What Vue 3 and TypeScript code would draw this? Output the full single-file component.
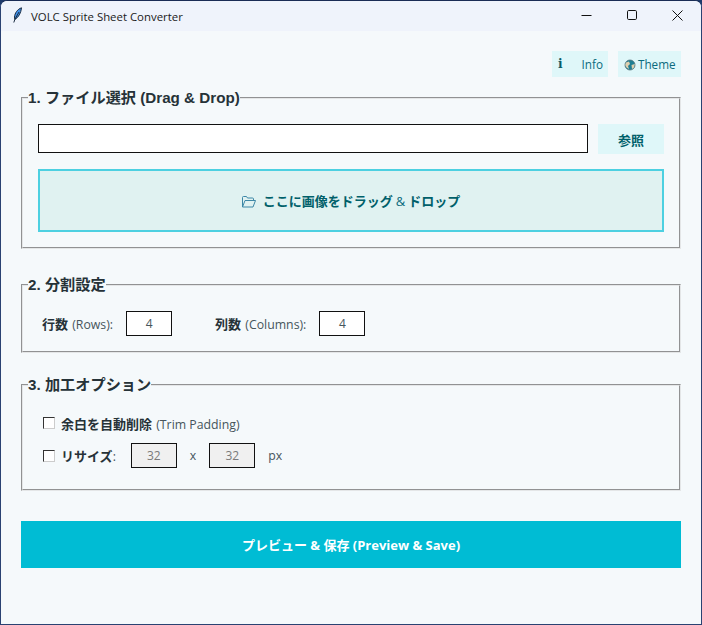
<script setup lang="ts">
const title = 'VOLC Sprite Sheet Converter'
</script>

<template>
  <div class="window">
    <header class="titlebar">
      <svg class="app-icon" width="16" height="18" viewBox="0 0 16 18">
        <path d="M10.500 .8C6.500 2.200 3.800 6 3.500 10l.3 2.500C7.500 10.500 10 6 10.500 .8z" fill="#3f8fe8" stroke="#1a2b40" stroke-width="1" stroke-linejoin="round" />
        <path d="M8 5 3.800 12.500 2.800 15.500" fill="none" stroke="#1a2b40" stroke-width="1" />
      </svg>
      <span class="title-text">{{ title }}</span>
      <div class="window-controls">
        <svg width="12" height="12" viewBox="0 0 12 12"><path d="M1.500 5.500h10" stroke="#111" fill="none" /></svg>
        <svg width="12" height="12" viewBox="0 0 12 12"><rect x="1.500" y=".5" width="9" height="9" rx="1.200" stroke="#111" fill="none" /></svg>
        <svg width="12" height="12" viewBox="0 0 12 12"><path d="M.5 .5l10 10M10.500 .5l-10 10" stroke="#111" fill="none" /></svg>
      </div>
    </header>

    <main class="content">
      <div class="toolbar">
        <button class="tool-btn info-btn"><span class="i-glyph">i</span><span>Info</span></button>
        <button class="tool-btn theme-btn">
          <svg class="globe" width="12" height="12" viewBox="0 0 12 12">
            <circle cx="6" cy="6" r="5" fill="#1f7f93" stroke="#56737c" stroke-width=".8" />
            <path d="M2 3.500 5 2.500 6 5 4 7 5 10 2.500 8.500 1.200 6zM7.500 6 10.800 5 10 8.500 8 10z" fill="#e0cfae" />
          </svg>
          <span>Theme</span>
        </button>
      </div>

      <fieldset class="group group-file">
        <legend>1. ファイル選択 (Drag &amp; Drop)</legend>
        <div class="group-body">
          <div class="file-row">
            <input class="path-input" type="text" />
            <button class="browse-btn">参照</button>
          </div>
          <div class="drop-zone">
            <svg class="folder" width="14" height="12" viewBox="0 0 14 12">
              <path d="M.5 11V1.500a1 1 0 0 1 1-1h3l1 1.500H10.500a1 1 0 0 1 1 1V4.500M.5 11 3 4.500h10.500L11 11z" fill="none" stroke="#3d87a6" stroke-width="1" stroke-linejoin="round" />
            </svg>
            <span class="drop-text">ここに画像をドラッグ <span class="amp">&amp;</span> ドロップ</span>
          </div>
        </div>
      </fieldset>

      <fieldset class="group group-split">
        <legend>2. 分割設定</legend>
        <div class="group-body split-row">
          <label class="field"><span class="label"><b>行数</b> (Rows):</span><input class="num" value="4" /></label>
          <label class="field"><span class="label"><b>列数</b> (Columns):</span><input class="num" value="4" /></label>
        </div>
      </fieldset>

      <fieldset class="group group-options">
        <legend>3. 加工オプション</legend>
        <div class="group-body">
          <div class="option-row">
            <span class="check"></span>
            <span class="label"><b>余白を自動削除</b> (Trim Padding)</span>
          </div>
          <div class="option-row resize-row">
            <span class="check"></span>
            <span class="label"><b class="tight">リサイズ</b>:</span>
            <div class="size-fields">
              <input class="num disabled" value="32" disabled />
              <span class="label">x</span>
              <input class="num disabled" value="32" disabled />
              <span class="label">px</span>
            </div>
          </div>
        </div>
      </fieldset>

      <button class="primary">プレビュー &amp; 保存 (Preview &amp; Save)</button>
    </main>
  </div>
</template>

<style>
html, body { margin: 0; background: #1e3a6b; overflow: hidden; }
</style>

<style scoped>
* { box-sizing: border-box; }
.window {
  width: 702px; height: 625px; background: #f5f9fb; border: 1px solid #2a4272; border-top-color: #1a2c55;
  border-radius: 7px 7px 0 0; overflow: hidden; display: flex; flex-direction: column;
  font-family: "Open Sans", "Noto Sans CJK JP", sans-serif; color: #2b3a42;
}
.titlebar { height: 30px; flex: none; background: #eff3fb; display: flex; align-items: center; padding-left: 10px; }
.app-icon { flex: none; }
.title-text { margin-left: 4px; font-size: 11.4px; color: #1a1a1a; font-family: "Open Sans", sans-serif; }
.window-controls { margin-left: auto; display: flex; gap: 34px; padding-right: 17px; }
.content { flex: 1; padding: 20px 20px 0; display: flex; flex-direction: column; }
.toolbar { display: flex; justify-content: flex-end; gap: 10px; height: 26px; }
.tool-btn { height: 26px; border: 0; background: #dff7f9; color: #0b6a7d; font: 11.7px "Open Sans", sans-serif; display: flex; align-items: center; padding: 0; }
.info-btn { width: 56px; padding-left: 5px; padding-right: 5px; justify-content: space-between; }
.i-glyph { font: bold 12px "DejaVu Serif", serif; color: #0b5a66; margin-left: 1px; }
.theme-btn { width: 63px; padding-left: 6px; gap: 2px; }
.globe { margin-top: 2px; }

.group { margin: 0; padding: 0; min-width: 0; border: 2px groove #e4e6e7; }
legend { padding: 0; margin-left: 5px; font: bold 15.2px/20px "Liberation Sans", "Noto Sans CJK JP", sans-serif; color: #263238; }
.group-file { height: 161px; margin-top: 11px; }
.group-file .group-body { padding: 16px 15px 0; }
.file-row { display: flex; gap: 10px; }
.path-input { width: 550px; height: 29px; border: 1px solid #111; background: #fff; outline: 0; padding: 0; }
.browse-btn { width: 66px; height: 30px; border: 0; background: #dff7f9; color: #00606a; font: bold 13px "Noto Sans CJK JP", sans-serif; }
.drop-zone { margin-top: 15px; height: 63px; border: 2px solid #4dd0e1; background: #e0f2f1; display: flex; align-items: center; justify-content: center; gap: 7px; }
.folder { margin-top: 2px; }
.drop-text { font: bold 13px "Noto Sans CJK JP", sans-serif; color: #00606a; }
.amp { font: 13px "Open Sans", sans-serif; color: #0b6a7d; }

.group-split { height: 78px; margin-top: 26px; }
.split-row { display: flex; gap: 43px; padding: 16px 19px 0; }
.field { display: flex; align-items: center; gap: 13px; }
.label { font-size: 12.3px; color: #46555c; white-space: nowrap; }
.label b { font: bold 13px "Noto Sans CJK JP", sans-serif; color: #263238; margin-right: 1px; }
.label b.tight { margin-right: 0; }
.num { width: 46px; height: 25px; border: 1px solid #111; background: #fff; text-align: center; font: 12px "Open Sans", sans-serif; color: #46555c; padding: 0; outline: 0; }
.disabled { background: #f0f0f0; color: #7a7a7a; }

.group-options { height: 116px; margin-top: 22px; }
.group-options .group-body { padding: 19px 20px 0; }
.option-row { display: flex; align-items: center; height: 18px; gap: 6px; }
.resize-row { margin-top: 11px; height: 25px; }
.size-fields { display: flex; align-items: center; gap: 13px; margin-left: 9px; }
.check { width: 12px; height: 12px; border: 1px solid #333; border-right-color: #ccc; border-bottom-color: #ccc; background: #fff; flex: none; }

.primary { margin-top: 30px; width: 660px; height: 47px; border: 0; background: #00bcd4; color: #fff; font: bold 13px "Open Sans", "Noto Sans CJK JP", sans-serif; }
</style>
